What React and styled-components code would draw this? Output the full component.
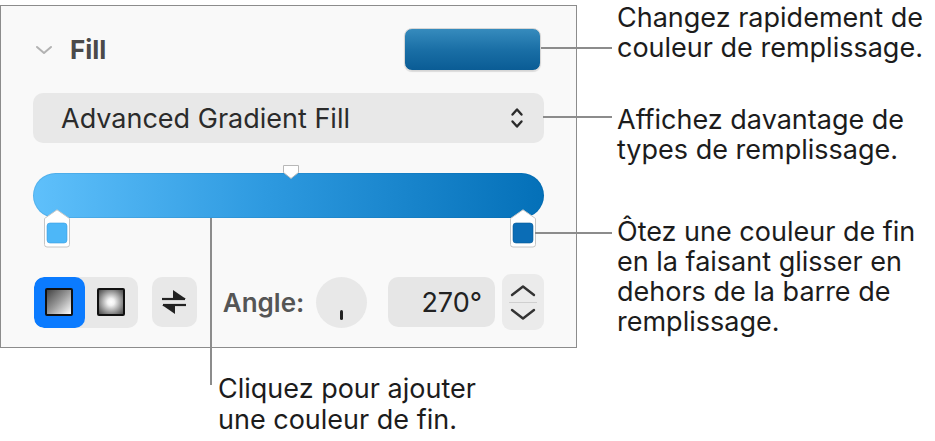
import React from 'react';
import styled, { createGlobalStyle } from 'styled-components';

const Global = createGlobalStyle`
    body {
        margin: 0;
        background: #ffffff;
        font-family: Inter, "Liberation Sans", sans-serif;
    }
`

const Figure = styled.div`
    display: flex;
    align-items: flex-start;
    width: 935px;
    height: 441px;
    overflow: hidden;
`

const LeftColumn = styled.div`
    display: flex;
    flex-direction: column;
    width: 577px;
    flex-shrink: 0;
`

const Panel = styled.div`
    box-sizing: border-box;
    margin-top: 5px;
    width: 577px;
    height: 343px;
    border: 1px solid #8c8c8c;
    background: #f9f9f9;
    padding: 22px 32px 17px 32px;
    display: flex;
    flex-direction: column;
`

const Header = styled.div`
    display: flex;
    align-items: center;
    height: 43px;
`

const Disclosure = styled.svg`
    width: 18px;
    height: 10px;
    margin-left: 2px;
    margin-right: 17px;
`

const Title = styled.span`
    font-size: 26px;
    font-weight: 700;
    color: #4a4a4a;
    flex: 1;
`

const ColorWell = styled.div`
    width: 137px;
    height: 43px;
    margin-right: 3px;
    box-sizing: border-box;
    border-radius: 8px;
    border: 1px solid #d6d6d6;
    background: linear-gradient(180deg, #368bbd 0%, #1a6fa6 50%, #0a5c95 100%);
    box-shadow: 0 1px 1px rgba(0, 0, 0, 0.12);
`

const Dropdown = styled.div`
    margin-top: 22px;
    height: 50px;
    border-radius: 10px;
    background: #e8e8e8;
    display: flex;
    align-items: center;
    padding: 0 20px 0 28px;
    font-size: 27px;
    color: #2b2b2b;
    justify-content: space-between;
`

const GradientArea = styled.div`
    position: relative;
    margin-top: 21px;
    height: 83px;
`

const Bar = styled.div`
    margin-top: 9px;
    height: 45px;
    border-radius: 23px;
    background: linear-gradient(90deg, #5fc0fb 0%, #2e9ae0 45%, #0470b8 100%);
    box-shadow: inset 0 0 0 1px rgba(0, 80, 140, 0.12);
`

const Midpoint = styled.svg`
    position: absolute;
    top: 0;
    left: 249px;
    width: 18px;
    height: 16px;
`

const Stop = styled.svg`
    position: absolute;
    top: 45px;
    left: ${p => p.left}px;
    width: 28px;
    height: 39px;
`

const ControlRow = styled.div`
    display: flex;
    align-items: center;
    margin-top: 27px;
    height: 56px;
`

const Segmented = styled.div`
    display: flex;
    height: 51px;
    width: 104px;
    margin-left: 1px;
    border-radius: 10px;
    background: #e8e8e8;
    overflow: hidden;
`

const Segment = styled.div`
    width: ${p => (p.active ? 51 : 53)}px;
    border-radius: ${p => (p.active ? '10px' : '0')};
    background: ${p => (p.active ? '#0b7bff' : 'transparent')};
    display: flex;
    align-items: center;
    justify-content: center;
`

const Swatch = styled.div`
    box-sizing: border-box;
    width: 28px;
    height: 28px;
    border: 2px solid #111;
    border-radius: 2px;
    background: ${p => p.kind === 'radial'
        ? 'radial-gradient(circle at 50% 50%, #ffffff 0%, #f2f2f2 20%, #7a7a7a 75%, #4a4a4a 100%)'
        : 'linear-gradient(135deg, #444 0%, #9a9a9a 50%, #ffffff 100%)'};
`

const IconButton = styled.div`
    margin-left: 14px;
    width: 45px;
    height: 50px;
    border-radius: 10px;
    background: #e8e8e8;
    display: flex;
    align-items: center;
    justify-content: center;
`

const Label = styled.span`
    margin-left: 26px;
    font-size: 26px;
    font-weight: 600;
    color: #555555;
`

const Dial = styled.div`
    position: relative;
    margin-left: 12px;
    width: 51px;
    height: 51px;
    border-radius: 50%;
    background: #e8e8e8;
`

const DialTick = styled.div`
    position: absolute;
    left: 24px;
    top: 33px;
    width: 3px;
    height: 10px;
    border-radius: 2px;
    background: #222;
`

const NumberField = styled.div`
    box-sizing: border-box;
    margin-left: 21px;
    width: 107px;
    height: 50px;
    border-radius: 10px;
    background: #e6e6e6;
    display: flex;
    align-items: center;
    justify-content: flex-end;
    padding-right: 13px;
    font-size: 27px;
    color: #222;
`

const Stepper = styled.div`
    margin-left: 7px;
    width: 42px;
    height: 56px;
    border-radius: 9px;
    background: #ebebeb;
    display: flex;
    flex-direction: column;
    align-items: center;
    justify-content: center;
`

const StepDivider = styled.div`
    width: 28px;
    height: 1px;
    background: #cfcfcf;
    margin: 5px 0;
`

const Callouts = styled.div`
    display: flex;
    flex-direction: column;
    margin-left: 40px;
    padding-top: 3px;
`

const Callout = styled.p`
    position: relative;
    margin: ${p => p.gap}px 0 0 0;
    font-size: 27px;
    line-height: 30px;
    color: #1c1c1c;
    white-space: nowrap;

    &::before {
        content: '';
        position: absolute;
        top: ${p => p.lineTop}px;
        left: ${p => -p.lineFrom}px;
        width: ${p => p.lineFrom - 5}px;
        height: 2px;
        background: #8c8c8c;
    }
`

const Caption = styled.p`
    position: relative;
    margin: 25px 0 0 218px;
    font-size: 27px;
    line-height: 31px;
    color: #1c1c1c;
    white-space: nowrap;

    &::before {
        content: '';
        position: absolute;
        left: -8px;
        top: -155px;
        width: 2px;
        height: 167px;
        background: #8c8c8c;
    }
`

const App = () => {
    return(
        <Figure>
            <Global />
            <LeftColumn>
                <Panel>
                    <Header>
                        <Disclosure viewBox="0 0 18 10">
                            <path d="M2 2 L9 8 L16 2" fill="none" stroke="#b2b2b2" strokeWidth="2"
                                strokeLinecap="round" strokeLinejoin="round" />
                        </Disclosure>
                        <Title>Fill</Title>
                        <ColorWell />
                    </Header>
                    <Dropdown>
                        <span>Advanced Gradient Fill</span>
                        <svg width="14" height="24" viewBox="0 0 14 24">
                            <path d="M2.5 8.5 L7 3.5 L11.5 8.5 M2.5 15.5 L7 20.5 L11.5 15.5" fill="none"
                                stroke="#2b2b2b" strokeWidth="2.4" strokeLinecap="round" strokeLinejoin="round" />
                        </svg>
                    </Dropdown>
                    <GradientArea>
                        <Bar />
                        <Midpoint viewBox="0 0 18 16">
                            <path d="M1.5 1.5 H16.5 V8.5 L9 14.5 L1.5 8.5 Z" fill="#ffffff" stroke="#b8b8b8" strokeWidth="1" />
                        </Midpoint>
                        <Stop left={10} viewBox="0 0 28 39">
                            <path d="M1.5 9.5 L14 0.8 L26.5 9.5 V35.5 Q26.5 38 24 38 H4 Q1.5 38 1.5 35.5 Z"
                                fill="#ffffff" stroke="#c6c6c6" strokeWidth="1" />
                            <rect x="4" y="14" width="20" height="20" rx="3" fill="#4db7f8" stroke="#3a9ee0" strokeWidth="0.6" />
                        </Stop>
                        <Stop left={476} viewBox="0 0 28 39">
                            <path d="M1.5 9.5 L14 0.8 L26.5 9.5 V35.5 Q26.5 38 24 38 H4 Q1.5 38 1.5 35.5 Z"
                                fill="#ffffff" stroke="#c6c6c6" strokeWidth="1" />
                            <rect x="4" y="14" width="20" height="20" rx="3" fill="#0b6db6" stroke="#085a98" strokeWidth="0.6" />
                        </Stop>
                    </GradientArea>
                    <ControlRow>
                        <Segmented>
                            <Segment active>
                                <Swatch kind="linear" />
                            </Segment>
                            <Segment>
                                <Swatch kind="radial" />
                            </Segment>
                        </Segmented>
                        <IconButton>
                            <svg width="26" height="28" viewBox="0 0 26 28">
                                <path d="M1 11 H24" stroke="#222" strokeWidth="2.2" />
                                <path d="M12 2 L25 11 H12 Z" fill="#222" />
                                <path d="M2 17 H25" stroke="#222" strokeWidth="2.2" />
                                <path d="M14 26 L1 17 H14 Z" fill="#222" />
                            </svg>
                        </IconButton>
                        <Label>Angle:</Label>
                        <Dial>
                            <DialTick />
                        </Dial>
                        <NumberField>270°</NumberField>
                        <Stepper>
                            <svg width="28" height="13" viewBox="0 0 28 13">
                                <path d="M3 11 L14 2.5 L25 11" fill="none" stroke="#333" strokeWidth="2.4"
                                    strokeLinecap="round" strokeLinejoin="round" />
                            </svg>
                            <StepDivider />
                            <svg width="28" height="13" viewBox="0 0 28 13">
                                <path d="M3 2 L14 10.5 L25 2" fill="none" stroke="#333" strokeWidth="2.4"
                                    strokeLinecap="round" strokeLinejoin="round" />
                            </svg>
                        </Stepper>
                    </ControlRow>
                </Panel>
                <Caption>
                    Cliquez pour ajouter<br />
                    une couleur de fin.
                </Caption>
            </LeftColumn>
            <Callouts>
                <Callout gap={0} lineTop={44} lineFrom={76}>
                    Changez rapidement de<br />
                    couleur de remplissage.
                </Callout>
                <Callout gap={42} lineTop={11} lineFrom={74}>
                    Affichez davantage de<br />
                    types de remplissage.
                </Callout>
                <Callout gap={52} lineTop={15} lineFrom={82}>
                    Ôtez une couleur de fin<br />
                    en la faisant glisser en<br />
                    dehors de la barre de<br />
                    remplissage.
                </Callout>
            </Callouts>
        </Figure>
    );
}

export default App;
